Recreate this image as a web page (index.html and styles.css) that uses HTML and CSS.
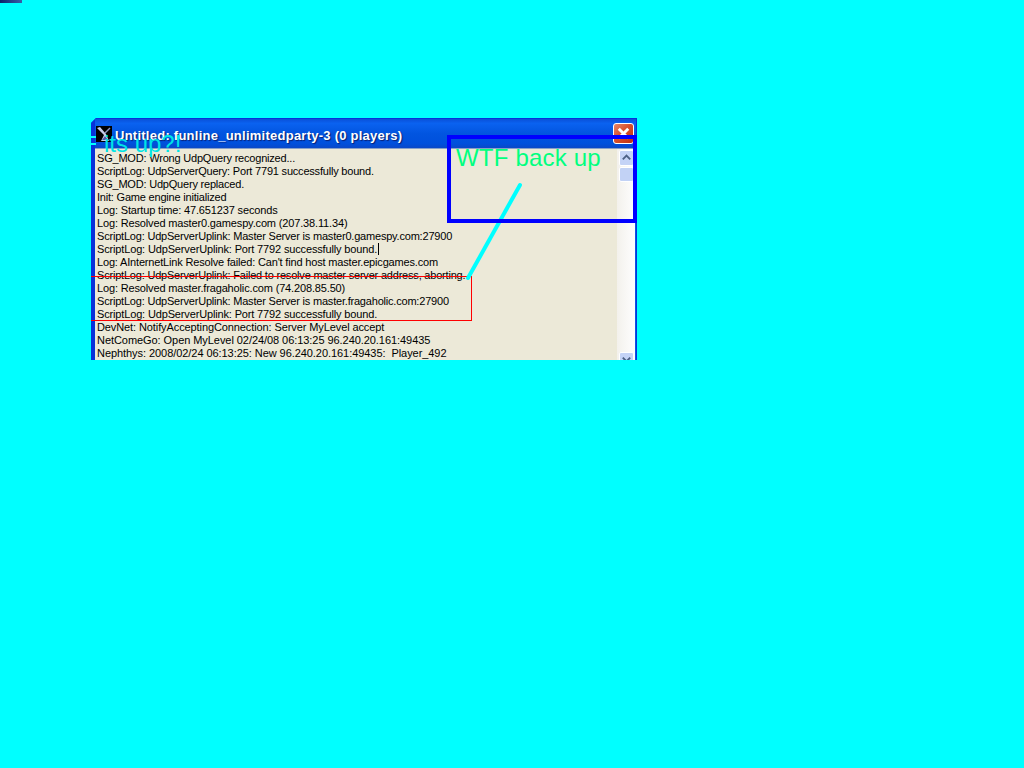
FILE: index.html
```html
<!DOCTYPE html>
<html lang="en">
<head>
<meta charset="utf-8">
<title>Untitled: funline_unlimitedparty-3</title>
<link rel="stylesheet" href="styles.css">
</head>
<body>
<div class="corner-bar"></div>
<div class="window">
  <div class="titlebar">
    <svg class="app-icon" viewBox="0 0 16 16"><rect width="16" height="16" fill="#000"/><path d="M1 2 L4 1 L10 8 L13 15 L5 15 L8 9 Z" fill="#c8cce8"/><path d="M9 7 L14 2" stroke="#9098c0" stroke-width="1.500"/><path d="M6 14 L12 14 L9 10 Z" fill="#5058a8"/></svg>
    <span class="title-text">Untitled: funline_unlimitedparty-3 (0 players)</span>
    <span class="close"><svg viewBox="0 0 20 20"><path d="M5 5 L15 15 M15 5 L5 15" stroke="#fff" stroke-width="3" fill="none"/></svg></span>
  </div>
  <div class="client">
    <div class="log">
      <div>SG_MOD: Wrong UdpQuery recognized...</div>
      <div>ScriptLog: UdpServerQuery: Port 7791 successfully bound.</div>
      <div>SG_MOD: UdpQuery replaced.</div>
      <div>Init: Game engine initialized</div>
      <div class="ls-c">Log: Startup time: 47.651237 seconds</div>
      <div class="ls-c">Log: Resolved master0.gamespy.com (207.38.11.34)</div>
      <div>ScriptLog: UdpServerUplink: Master Server is master0.gamespy.com:27900</div>
      <div class="ls-c">ScriptLog: UdpServerUplink: Port 7792 successfully bound.<span class="caret"></span></div>
      <div class="ls-d">Log: AInternetLink Resolve failed: Can't find host master.epicgames.com</div>
      <div>ScriptLog: UdpServerUplink: Failed to resolve master server address, aborting.</div>
      <div class="ls-c">Log: Resolved master.fragaholic.com (74.208.85.50)</div>
      <div>ScriptLog: UdpServerUplink: Master Server is master.fragaholic.com:27900</div>
      <div class="ls-c">ScriptLog: UdpServerUplink: Port 7792 successfully bound.</div>
      <div class="ls-b">DevNet: NotifyAcceptingConnection: Server MyLevel accept</div>
      <div class="ls-a">NetComeGo: Open MyLevel 02/24/08 06:13:25 96.240.20.161:49435</div>
      <div class="ls-a">Nephthys: 2008/02/24 06:13:25: New 96.240.20.161:49435:&nbsp; Player_492</div>
    </div>
    <div class="scrollbar">
      <span class="sb-btn"><svg viewBox="0 0 14 14"><path d="M3 9 L7 5 L11 9" stroke="#4d6185" stroke-width="2" fill="none"/></svg></span>
      <span class="sb-thumb"></span>
      <span class="sb-spacer"></span>
      <span class="sb-btn sb-last"><svg viewBox="0 0 14 14"><path d="M3 5 L7 9 L11 5" stroke="#4d6185" stroke-width="2" fill="none"/></svg></span>
    </div>
  </div>
</div>
<div class="mark-red"></div>
<svg class="mark-line" viewBox="0 0 70 110"><path d="M55 6 L3 99" stroke="#00ffff" stroke-width="4" stroke-linecap="round"/></svg>
<div class="mark-blue"></div>
<span class="note-up">its up?!</span>
<span class="note-wtf">WTF back up</span>
<span class="tick tick-a"></span>
<span class="tick tick-b"></span>
</body>
</html>
```
FILE: styles.css
```css
html, body { margin: 0; padding: 0; }
body { width: 1024px; height: 768px; background: #00ffff; overflow: hidden; position: relative; font-family: "Liberation Sans", Arial, sans-serif; }
.corner-bar { position: absolute; left: 0; top: 0; width: 22px; height: 3px; background: linear-gradient(90deg, #0a246a, #3a5ea8); }
.window { position: absolute; left: 91px; top: 118px; width: 546px; height: 242px; box-sizing: border-box; background: #0a55e3; border: solid #0831d9; border-width: 1px 1px 0 4px; clip-path: polygon(5px 0, 100% 0, 100% 100%, 0 100%, 0 5px); display: flex; flex-direction: column; overflow: hidden; }
.titlebar { height: 29px; flex: none; display: flex; align-items: center; box-sizing: border-box; padding: 0 2px 0 1px; background: linear-gradient(180deg, #0a50d8 0%, #0a62f0 15%, #0255e0 50%, #0050dc 85%, #0a48c8 100%); }
.app-icon { width: 16px; height: 16px; flex: none; }
.title-text { margin-left: 3px; padding-top: 3px; color: #fff; font: bold 13px "Liberation Sans", Arial, sans-serif; letter-spacing: 0.25px; text-shadow: 1px 1px 1px #0a1e70; white-space: nowrap; flex: 1; }
.close { width: 21px; height: 21px; flex: none; box-sizing: border-box; border: 1px solid #fff; border-radius: 3px; background: linear-gradient(135deg, #e88868, #d8502c 45%, #c03010); display: block; }
.close svg { display: block; width: 19px; height: 19px; }
.client { flex: 1; min-height: 0; display: flex; background: #ece9d8; border-top: 1px solid #88a0c8; margin-right: 1px; overflow: hidden; }
.log { flex: 1; padding: 3px 0 0 2px; color: #000; font-size: 11px; line-height: 13px; white-space: nowrap; letter-spacing: -0.2px; overflow: hidden; }
.ls-a { letter-spacing: -0.06px; }
.ls-b { letter-spacing: -0.1px; }
.ls-c { letter-spacing: -0.15px; }
.ls-d { letter-spacing: -0.17px; }
.caret { display: inline-block; width: 1px; height: 12px; background: #000; vertical-align: top; margin-left: 1px; }
.scrollbar { width: 18px; flex: none; display: flex; flex-direction: column; align-items: center; padding: 1px 0 0 0; background: linear-gradient(90deg, #f3f1ec, #fefefe); box-sizing: border-box; }
.sb-btn { width: 15px; height: 16px; flex: none; box-sizing: border-box; border: 1px solid #fff; border-radius: 2px; background: #c4d3f6; display: block; }
.sb-btn svg { display: block; width: 13px; height: 13px; }
.sb-last { margin-bottom: -8px; }
.sb-thumb { width: 15px; height: 15px; flex: none; box-sizing: border-box; border: 1px solid #fff; border-radius: 2px; background: #c2d2f5; margin-top: 1px; }
.sb-spacer { flex: 1; }
.mark-red { position: absolute; left: 91px; top: 276px; width: 380px; height: 43px; border: solid #ff0000; border-width: 1px 1px 1px 0; }
.mark-line { position: absolute; left: 465px; top: 179px; width: 70px; height: 110px; }
.mark-blue { position: absolute; left: 447px; top: 135px; width: 190px; height: 88px; box-sizing: border-box; border: 4px solid #0000ff; }
.note-up { position: absolute; left: 104px; top: 130px; color: #00e5e5; font-size: 24px; line-height: 27px; }
.note-wtf { position: absolute; left: 456px; top: 144px; color: #00ff7f; font-size: 24px; line-height: 28px; letter-spacing: 0.2px; white-space: nowrap; }
.tick { position: absolute; left: 91px; width: 5px; height: 2px; background: #00ffff; }
.tick-a { top: 136px; }
.tick-b { top: 143px; }
```
